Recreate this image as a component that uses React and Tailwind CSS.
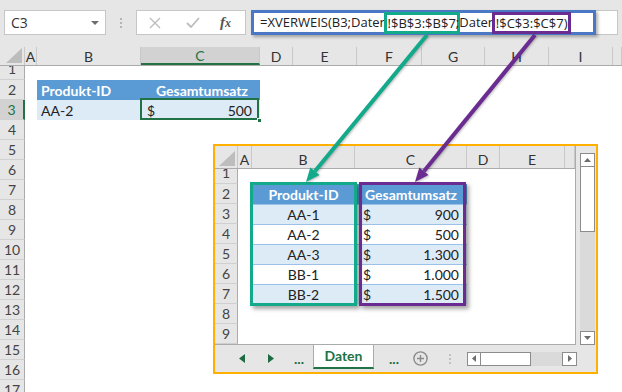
import React from 'react';

const MAIN_COLS = [
  { id: 'A', cls: 'w-[12px]' },
  { id: 'B', cls: 'w-[104px]' },
  { id: 'C', cls: 'w-[119px]' },
  { id: 'D', cls: 'w-[33px]' },
  { id: 'E', cls: 'w-[64px]' },
  { id: 'F', cls: 'w-[65px]' },
  { id: 'G', cls: 'w-[63px]' },
  { id: 'H', cls: 'w-[64px]' },
  { id: 'I', cls: 'w-[64px]' },
  { id: '', cls: 'w-[9px]' },
];

const EMB_COLS = [
  { id: 'A', cls: 'w-[14px]' },
  { id: 'B', cls: 'w-[103px]' },
  { id: 'C', cls: 'w-[112px]' },
  { id: 'D', cls: 'w-[33px]' },
  { id: 'E', cls: 'w-[65px]' },
  { id: '', cls: 'w-[10px]' },
];

const DATA = [
  ['AA-1', '900'],
  ['AA-2', '500'],
  ['AA-3', '1.300'],
  ['BB-1', '1.000'],
  ['BB-2', '1.500'],
];

const MAIN_ROWS = Array.from({ length: 17 }, (_, i) => i + 1);
const EMB_ROWS = Array.from({ length: 9 }, (_, i) => i + 1);

// kleines Dreieck oben links im Kopf
const Corner = ({ w }) => (
  <div className={`relative shrink-0 border-r border-[#c8c8c8] ${w}`}>
    <svg className="absolute bottom-[2px] right-[2px]" width="16" height="15">
      <polygon points="16,0 16,15 0,15" fill="#bdbdbd" />
    </svg>
  </div>
);

const FormulaBar = () => (
  <div className="flex h-[47px] items-start bg-[#e6e6e6] pt-[10px]">
    <div className="ml-[4px] flex h-[25px] w-[102px] shrink-0 items-center justify-between border border-[#c6c6c6] bg-white pl-[6px] pr-[6px]">
      <span className="font-['Open_Sans',sans-serif] text-[14px] text-[#333]">C3</span>
      <svg width="8" height="4">
        <polygon points="0,0 8,0 4,4" fill="#6d6d6d" />
      </svg>
    </div>
    <div className="flex h-[25px] w-[30px] shrink-0 flex-col items-center justify-center gap-[2px]">
      <span className="h-[2px] w-[2px] bg-[#b5b5b5]" />
      <span className="h-[2px] w-[2px] bg-[#b5b5b5]" />
      <span className="h-[2px] w-[2px] bg-[#b5b5b5]" />
    </div>
    <div className="flex h-[25px] w-[110px] shrink-0 items-center border border-[#c6c6c6] bg-white">
      <svg className="ml-[12px]" width="12" height="12">
        <path d="M1 1 L11 11 M11 1 L1 11" stroke="#bdbdbd" strokeWidth="1.4" />
      </svg>
      <svg className="ml-[25px]" width="14" height="11">
        <path d="M1 6 L5 10 L13 1" stroke="#bdbdbd" strokeWidth="1.8" fill="none" />
      </svg>
      <span className="ml-[20px] w-[16px] font-['Liberation_Serif',serif] text-[15px] font-bold italic leading-none text-[#555]">
        f<span className="text-[12px]">x</span>
      </span>
    </div>
    <div className="relative ml-[6px] mr-[4px] h-[25px] flex-1 border-y border-r border-[#c6c6c6] bg-white">
      <div className="-ml-px -mt-px flex h-[25px] w-[345px] items-center border-[3px] border-[#4a78c4] bg-white pl-[6px] font-['Open_Sans',sans-serif] text-[13px] whitespace-nowrap text-[#222] shadow-[2px_2px_3px_rgba(0,0,0,0.3)]">
        =XVERWEIS(B3;Daten
        <span className="inline-block h-[14px] leading-[14px] outline-[3px] outline-offset-[1px] outline-solid outline-[#13a98b]">
          !$B$3:$B$7
        </span>
        ;Daten
        <span className="inline-block h-[14px] leading-[14px] outline-[3px] outline-offset-[1px] outline-solid outline-[#6a2c91]">
          !$C$3:$C$7)
        </span>
      </div>
    </div>
  </div>
);

const mainCell = (row, col) => {
  const base = `shrink-0 ${col.cls}`;
  if (row === 2 && col.id === 'B')
    return <div key={col.id} className={`${base} flex items-center bg-[#5b9bd5] pl-[4px] font-bold text-white`}>Produkt-ID</div>;
  if (row === 2 && col.id === 'C')
    return <div key={col.id} className={`${base} flex items-center justify-end bg-[#5b9bd5] pr-[12px] font-bold text-white`}>Gesamtumsatz</div>;
  if (row === 3 && col.id === 'B')
    return <div key={col.id} className={`${base} flex items-center bg-[#ddebf7] pl-[4px]`}>AA-2</div>;
  if (row === 3 && col.id === 'C')
    return (
      <div key={col.id} className={`${base} relative flex items-center justify-between bg-[#ddebf7] pl-[6px] pr-[8px]`}>
        <span>$</span>
        <span>500</span>
        <div className="absolute -left-px -top-[2px] right-[1px] bottom-0 border-2 border-[#217346]" />
        <div className="absolute -bottom-[3px] right-[-2px] h-[5px] w-[5px] border border-white bg-[#217346]" />
      </div>
    );
  return <div key={col.id} className={base} />;
};

const MainSheet = () => (
  <div className="flex flex-col text-[14px]">
    <div className="flex h-[19px] border-b border-[#ababab] bg-[#e6e6e6]">
      <Corner w="w-[25px]" />
      {MAIN_COLS.map((c) => (
        <div
          key={c.id}
          className={`flex shrink-0 items-center justify-center border-r border-[#c8c8c8] ${c.cls} ${
            c.id === 'C' ? 'border-b-2 border-b-[#217346] bg-[#d2d2d2] text-[#217346]' : 'text-[#333]'
          }`}
        >
          {c.id}
        </div>
      ))}
    </div>
    {MAIN_ROWS.map((r) => (
      <div key={r} className={`flex shrink-0 ${r === 1 ? 'h-[14px]' : 'h-[20px]'}`}>
        <div
          className={`flex w-[25px] shrink-0 justify-center overflow-hidden border-b border-b-[#d0d0d0] leading-[20px] ${
            r === 1 ? 'items-end' : 'items-center'
          } ${
            r === 3
              ? 'border-r-2 border-r-[#217346] bg-[#d2d2d2] text-[#217346]'
              : 'border-r border-r-[#ababab] bg-[#e6e6e6] text-[#444]'
          }`}
        >
          {r}
        </div>
        {MAIN_COLS.map((c) => mainCell(r, c))}
      </div>
    ))}
  </div>
);

const embCell = (row, col) => {
  const base = `shrink-0 ${col.cls}`;
  if (row === 2 && col.id === 'B')
    return <div key={col.id} className={`${base} flex items-center justify-center bg-[#5b9bd5] font-bold text-white`}>Produkt-ID</div>;
  if (row === 2 && col.id === 'C')
    return <div key={col.id} className={`${base} flex items-center justify-center bg-[#5b9bd5] font-bold text-white`}>Gesamtumsatz</div>;
  if (row >= 3 && row <= 7 && (col.id === 'B' || col.id === 'C')) {
    const [id, val] = DATA[row - 3];
    const bg = row % 2 === 1 ? 'bg-[#ddebf7]' : 'bg-white';
    if (col.id === 'B')
      return <div key={col.id} className={`${base} flex items-center justify-center border-t border-[#9bc2e6] ${bg}`}>{id}</div>;
    return (
      <div key={col.id} className={`${base} flex items-center justify-between border-t border-[#9bc2e6] pl-[8px] pr-[8px] ${bg}`}>
        <span>$</span>
        <span>{val}</span>
      </div>
    );
  }
  return <div key={col.id} className={`${base} bg-white`} />;
};

const Arrow = ({ dir }) => (
  <svg width="6" height="9">
    <polygon points={dir === 'l' ? '6,0 6,9 0,4.5' : '0,0 0,9 6,4.5'} fill="#1e6b42" />
  </svg>
);

const EmbeddedSheet = () => (
  <div className="absolute left-[213px] top-[144px] flex h-[230px] w-[385px] flex-col border-2 border-[#ffb000] bg-[#e6e6e6] text-[14px]">
    <div className="flex h-[199px] shrink-0">
      <div className="relative flex w-[361px] shrink-0 flex-col border-b border-r border-[#ababab]">
        <div className="flex h-[23px] shrink-0 border-b border-[#ababab] bg-[#e6e6e6]">
          <Corner w="w-[23px]" />
          {EMB_COLS.map((c) => (
            <div key={c.id} className={`flex shrink-0 items-center justify-center border-r border-[#c8c8c8] pt-[5px] text-[#333] ${c.cls}`}>
              {c.id}
            </div>
          ))}
        </div>
        {EMB_ROWS.map((r) => (
          <div key={r} className={`flex shrink-0 ${r === 1 ? 'h-[15px]' : 'h-[20px]'}`}>
            <div
              className={`flex w-[23px] shrink-0 justify-center overflow-hidden border-b border-r border-b-[#d0d0d0] border-r-[#ababab] bg-[#e6e6e6] leading-[20px] text-[#444] ${
                r === 1 ? 'items-end' : 'items-center'
              }`}
            >
              {r}
            </div>
            {EMB_COLS.map((c) => embCell(r, c))}
          </div>
        ))}
        <div className="absolute left-[35px] top-[36px] h-[124px] w-[107px] border-[3px] border-[#13a98b] shadow-[3px_3px_4px_rgba(0,0,0,0.35)]" />
        <div className="absolute left-[144px] top-[36px] h-[124px] w-[107px] border-[3px] border-[#6a2c91] shadow-[3px_3px_4px_rgba(0,0,0,0.35)]" />
      </div>
      <div className="flex w-[20px] shrink-0 flex-col pl-[4px] pr-[1px] pt-[7px]">
        <div className="flex h-[14px] shrink-0 items-center justify-center border border-[#8c8c8c] bg-white">
          <svg width="7" height="4"><polygon points="0,4 7,4 3.5,0" fill="#6d6d6d" /></svg>
        </div>
        <div className="h-[65px] shrink-0 border-x border-b border-[#8c8c8c] bg-white" />
        <div className="flex-1 bg-[#dadada]" />
        <div className="flex h-[14px] shrink-0 items-center justify-center border border-[#8c8c8c] bg-white">
          <svg width="7" height="4"><polygon points="0,0 7,0 3.5,4" fill="#6d6d6d" /></svg>
        </div>
      </div>
    </div>
    <div className="flex h-[27px] shrink-0 items-center pl-[24px]">
      <Arrow dir="l" />
      <span className="ml-[23px] flex"><Arrow dir="r" /></span>
      <span className="ml-[19px] w-[12px] text-center font-bold leading-none text-[#1e6b42]">...</span>
      <div className="-mt-px ml-[8px] flex h-[25px] w-[61px] shrink-0 items-center justify-center self-start border-x border-b-2 border-x-[#ababab] border-b-[#217346] bg-white font-bold text-[#217346]">
        Daten
      </div>
      <span className="ml-[14px] w-[12px] text-center font-bold leading-none text-[#1e6b42]">...</span>
      <svg className="ml-[13px]" width="15" height="15">
        <circle cx="7.5" cy="7.5" r="6.6" stroke="#8a8a8a" strokeWidth="1.4" fill="none" />
        <path d="M7.5 4 V11 M4 7.5 H11" stroke="#8a8a8a" strokeWidth="1.4" />
      </svg>
      <div className="ml-[21px] flex w-[2px] flex-col gap-[2px]">
        <span className="h-[2px] w-[2px] bg-[#c0c0c0]" />
        <span className="h-[2px] w-[2px] bg-[#c0c0c0]" />
        <span className="h-[2px] w-[2px] bg-[#c0c0c0]" />
      </div>
      <div className="ml-[16px] flex h-[14px] w-[110px] shrink-0">
        <div className="flex w-[14px] items-center justify-center border border-[#8c8c8c] bg-white">
          <svg width="4" height="7"><polygon points="4,0 4,7 0,3.5" fill="#6d6d6d" /></svg>
        </div>
        <div className="w-[50px] border-y border-r border-[#8c8c8c] bg-white" />
        <div className="w-[31px] bg-[#dadada]" />
        <div className="flex w-[15px] items-center justify-center border border-[#8c8c8c] bg-white">
          <svg width="4" height="7"><polygon points="0,0 0,7 4,3.5" fill="#6d6d6d" /></svg>
        </div>
      </div>
    </div>
  </div>
);

// Verbindungspfeile von der Formel zur Tabelle
const Arrows = () => (
  <svg className="pointer-events-none absolute left-0 top-0" width="622" height="392">
    <g style={{ filter: 'drop-shadow(1px 1px 1px rgba(0,0,0,0.25))' }}>
      <line x1="427" y1="35" x2="314.9" y2="171.2" stroke="#13a98b" strokeWidth="4" />
      <polygon points="306,182 319.5,175 310.3,167.4" fill="#13a98b" />
      <line x1="535" y1="35" x2="423.9" y2="171.2" stroke="#6a2c91" strokeWidth="4" />
      <polygon points="415,182 428.5,175 419.3,167.4" fill="#6a2c91" />
    </g>
  </svg>
);

export default function App() {
  return (
    <div className="relative h-[392px] w-[622px] overflow-hidden bg-white font-['Lato',sans-serif] text-[#222]">
      <FormulaBar />
      <MainSheet />
      <EmbeddedSheet />
      <Arrows />
    </div>
  );
}
